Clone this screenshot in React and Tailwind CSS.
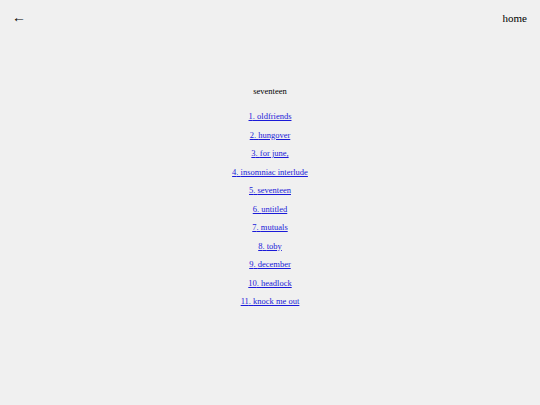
export default function App() {
  const songs = [
    "oldfriends",
    "hungover",
    "for june,",
    "insomniac interlude",
    "seventeen",
    "untitled",
    "mutuals",
    "toby",
    "december",
    "headlock",
    "knock me out",
  ];
  return (
    <div className="w-[540px] h-[405px] bg-[#f0f0f0] text-black overflow-hidden font-['Liberation_Serif',serif]">
      <div className="flex justify-between items-center pl-[12px] pr-[13px] pt-[9px] h-[28px]">
        <span className="text-[14px] leading-none -mt-[1px]">←</span>
        <span className="text-[11px] leading-none">home</span>
      </div>
      <div className="flex flex-col items-center mt-[58px]">
        <div className="text-[8.5px] leading-[10px]">seventeen</div>
        <div className="flex flex-col items-center mt-[15px] gap-[8.5px]">
          {songs.map((s, i) => (
            <a
              key={s}
              href="#"
              className="text-[8.5px] leading-[10px] text-[#1a1ad8] underline"
            >
              {i + 1}. {s}
            </a>
          ))}
        </div>
      </div>
    </div>
  );
}
